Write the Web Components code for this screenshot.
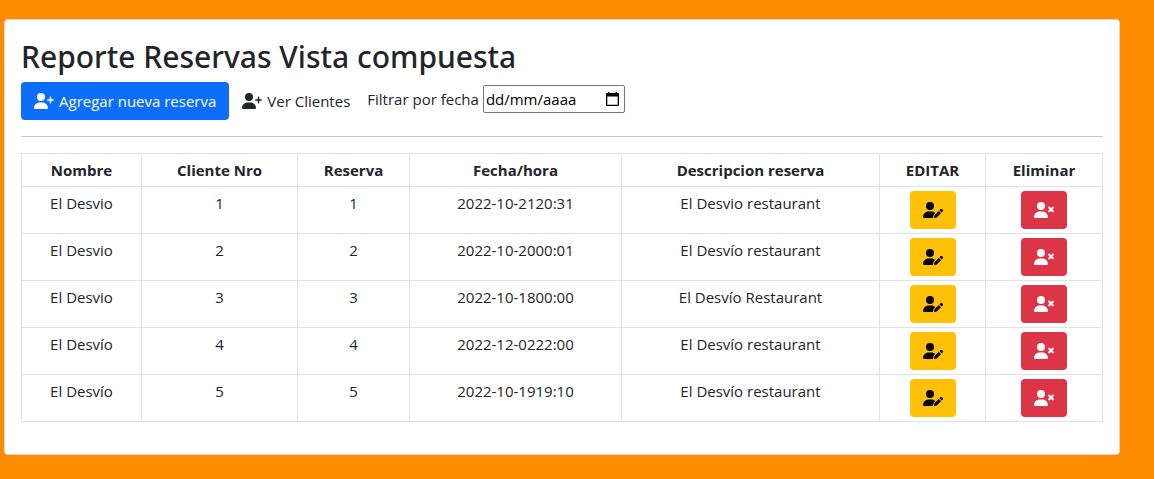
<!DOCTYPE html>
<html lang="es">
<head>
<meta charset="utf-8">
<title>Reporte Reservas</title>
<style>
  body { margin: 0; background: #ff8c00; color: #212529; font: 400 15px/24px "Open Sans", "Noto Sans", sans-serif; }
</style>
</head>
<body>
<report-card>
  <span slot="title">Reporte Reservas Vista compuesta</span>
  <report-toolbar slot="toolbar"></report-toolbar>
  <reservation-table></reservation-table>
</report-card>

<script>
const PERSON = '<path d="M224 256a128 128 0 1 0 0-256 128 128 0 1 0 0 256zm-45.700 48C79.800 304 0 383.800 0 482.300 0 498.700 13.300 512 29.700 512h388.600c16.400 0 29.700-13.300 29.700-29.700 0-98.500-79.800-178.300-178.300-178.300z"/>';
const ICONS = {
  plus: PERSON + '<path d="M616 200h-64v-64c0-13.300-10.700-24-24-24s-24 10.700-24 24v64h-64c-13.300 0-24 10.700-24 24s10.700 24 24 24h64v64c0 13.300 10.700 24 24 24s24-10.700 24-24v-64h64c13.300 0 24-10.700 24-24s-10.700-24-24-24z"/>',
  xmark: PERSON + '<path d="M589.600 240l45.600-45.600c6.300-6.300 6.300-16.500 0-22.800l-22.800-22.800c-6.300-6.300-16.500-6.300-22.800 0L544 194.400l-45.600-45.600c-6.300-6.300-16.500-6.300-22.800 0l-22.800 22.800c-6.300 6.300-6.300 16.500 0 22.800l45.600 45.600-45.600 45.600c-6.300 6.300-6.300 16.500 0 22.800l22.800 22.800c6.300 6.300 16.500 6.300 22.800 0l45.600-45.600 45.600 45.600c6.300 6.300 16.500 6.300 22.800 0l22.800-22.800c6.300-6.300 6.300-16.500 0-22.800z"/>',
  pen: '<path d="M224 256a128 128 0 1 0 0-256 128 128 0 1 0 0 256zm-45.700 48C79.800 304 0 383.800 0 482.300 0 498.700 13.300 512 29.700 512h293.100c-3.100-8.800-3.700-18.400-1.400-27.800l15-60.100c2.800-11.300 8.600-21.500 16.800-29.700l40.300-40.300c-32.100-31-75.700-50.100-123.900-50.100zM613.800 235.700c-15.600-15.600-40.900-15.600-56.600 0l-29.400 29.400 71 71 29.400-29.400c15.600-15.600 15.600-40.900 0-56.600zM375.900 417c-4.100 4.100-7 9.200-8.400 14.900l-15 60.100c-1.400 5.500 .2 11.200 4.200 15.200s9.700 5.600 15.200 4.200l60.100-15c5.600-1.400 10.800-4.300 14.900-8.400l129.200-129.300-71-71z"/>'
};

class UserIcon extends HTMLElement {
  connectedCallback() {
    this.attachShadow({ mode: 'open' }).innerHTML = `
      <style>
        :host { display: inline-flex; flex: none; }
        svg { width: 20px; height: 16px; fill: currentColor; overflow: visible; }
      </style>
      <svg viewBox="0 0 640 512" aria-hidden="true">${ICONS[this.getAttribute('name')]}</svg>`;
  }
}

class ActionButton extends HTMLElement {
  connectedCallback() {
    const label = this.getAttribute('label');
    this.attachShadow({ mode: 'open' }).innerHTML = `
      <style>
        :host { display: inline-flex; vertical-align: top; }
        button {
          display: inline-flex; align-items: center; gap: 5px;
          padding: 6px 12px; border: 1px solid transparent; border-radius: 4px;
          background: transparent; color: inherit; font: inherit; min-height: 38px; cursor: pointer;
        }
        :host([variant=primary]) button { background: #0d6efd; color: #fff; }
        :host([variant=warning]) button { background: #ffc107; color: #000; }
        :host([variant=danger]) button { background: #dc3545; color: #fff; }
      </style>
      <button type="button"${label ? ` aria-label="${label}"` : ''}><user-icon name="${this.getAttribute('icon')}"></user-icon><slot></slot></button>`;
  }
}

class DateFilter extends HTMLElement {
  connectedCallback() {
    this.attachShadow({ mode: 'open' }).innerHTML = `
      <style>
        :host { display: flex; align-items: center; gap: 4px; }
        .field {
          display: flex; align-items: center; box-sizing: border-box;
          width: 142px; height: 28px; padding: 0 5px 0 2px;
          border: 1px solid #767676; border-radius: 2px; background: #fff;
        }
        input {
          flex: 1; min-width: 0; padding: 0; border: 0; outline: 0;
          background: none; color: #000; font: inherit;
        }
        input::placeholder { color: #000; opacity: 1; }
        button { display: flex; padding: 0; border: 0; background: none; color: #000; }
        svg { width: 13px; height: 14px; }
      </style>
      <label for="date">Filtrar por fecha</label>
      <div class="field">
        <input id="date" type="text" placeholder="dd/mm/aaaa">
        <button type="button" aria-label="Abrir calendario">
          <svg viewBox="0 0 13 14" aria-hidden="true"><path fill="currentColor" fill-rule="evenodd" d="M2 0h1.500v1h6V0H11v1h1q1 0 1 1v11q0 1-1 1H1q-1 0-1-1V2q0-1 1-1h1zM1.300 4.500v8.200h10.400V4.500z"/></svg>
        </button>
      </div>`;
  }
}

class ReportToolbar extends HTMLElement {
  connectedCallback() {
    this.attachShadow({ mode: 'open' }).innerHTML = `
      <style>
        :host { display: flex; flex-wrap: wrap; align-items: flex-start; }
        date-filter { padding: 3px 0 0 4px; }
      </style>
      <action-button variant="primary" icon="plus">Agregar nueva reserva</action-button>
      <action-button icon="plus">Ver Clientes</action-button>
      <date-filter></date-filter>`;
  }
}

class ReservationTable extends HTMLElement {
  connectedCallback() {
    const rows = [
      ['El Desvio', 1, 1, '2022-10-2120:31', 'El Desvio restaurant'],
      ['El Desvio', 2, 2, '2022-10-2000:01', 'El Desvío restaurant'],
      ['El Desvio', 3, 3, '2022-10-1800:00', 'El Desvío Restaurant'],
      ['El Desvío', 4, 4, '2022-12-0222:00', 'El Desvío restaurant'],
      ['El Desvío', 5, 5, '2022-10-1919:10', 'El Desvío restaurant']
    ];
    const heads = ['Nombre', 'Cliente Nro', 'Reserva', 'Fecha/hora', 'Descripcion reserva', 'EDITAR', 'Eliminar'];
    const widths = [120, 156, 112, 212, 258, 106, 117];
    this.attachShadow({ mode: 'open' }).innerHTML = `
      <style>
        :host { display: block; }
        table { width: 100%; table-layout: fixed; border-collapse: collapse; text-align: center; }
        th, td { padding: 4px; border: 1px solid #dee2e6; vertical-align: top; }
        th { font-weight: 700; }
      </style>
      <table>
        <colgroup>${widths.map(w => `<col style="width:${w}px">`).join('')}</colgroup>
        <thead><tr>${heads.map(h => `<th scope="col">${h}</th>`).join('')}</tr></thead>
        <tbody>${rows.map(r => `<tr>${r.map(c => `<td>${c}</td>`).join('')}
          <td><action-button variant="warning" icon="pen" label="Editar"></action-button></td>
          <td><action-button variant="danger" icon="xmark" label="Eliminar"></action-button></td></tr>`).join('')}</tbody>
      </table>`;
  }
}

class ReportCard extends HTMLElement {
  connectedCallback() {
    this.attachShadow({ mode: 'open' }).innerHTML = `
      <style>
        :host {
          display: block; margin: 19px 34px 24px 4px; padding: 16px 16px 32px;
          background: #fff; border: 1px solid #d5d8dc; border-radius: 4px;
        }
        h2 { margin: 0 0 4px; font: 500 30px/42px "Noto Sans", "Open Sans", sans-serif; }
        hr { margin: 16px 0; border: 0; border-top: 1px solid #c8c9ca; }
      </style>
      <h2><slot name="title"></slot></h2>
      <slot name="toolbar"></slot>
      <hr>
      <slot></slot>`;
  }
}

customElements.define('user-icon', UserIcon);
customElements.define('action-button', ActionButton);
customElements.define('date-filter', DateFilter);
customElements.define('report-toolbar', ReportToolbar);
customElements.define('reservation-table', ReservationTable);
customElements.define('report-card', ReportCard);
</script>
</body>
</html>
